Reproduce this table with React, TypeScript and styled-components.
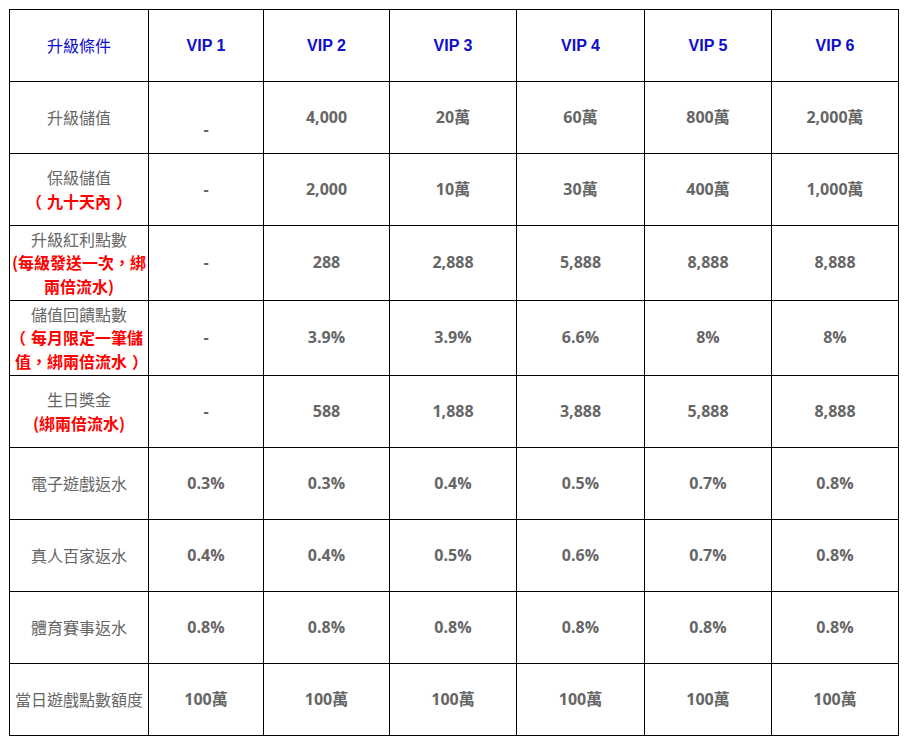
import React from "react";
import styled, { createGlobalStyle } from "styled-components";

const Global = createGlobalStyle`
  html, body { margin: 0; padding: 0; background: #fff; }
  body { font-family: "Open Sans", "Noto Sans CJK TC", sans-serif; }
`;

const Page = styled.div`
  padding: 9px;
`;

const Table = styled.table`
  border-collapse: separate;
  border-spacing: 0;
  table-layout: fixed;
  width: 890px;
  border-top: 1px solid #000;
  border-left: 1px solid #000;
`;

const Row = styled.tr<{ $h: number }>`
  height: ${(p) => p.$h}px;
`;

const Cell = styled.td`
  box-sizing: border-box;
  border-right: 1px solid #000;
  border-bottom: 1px solid #000;
  padding: 0 1px;
  text-align: center;
  vertical-align: middle;
  font-size: 16px;
  line-height: 23.5px;
`;

const Head = styled(Cell)<{ $label?: boolean }>`
  color: #0d0dcc;
  font-weight: ${(p) => (p.$label ? 400 : 700)};
  font-family: ${(p) =>
    p.$label
      ? `"Noto Sans CJK TC", sans-serif`
      : `"Liberation Sans", "Noto Sans CJK TC", sans-serif`};
`;

const Label = styled(Cell)`
  color: #666;
  font-family: "Noto Sans CJK TC", sans-serif;
  font-weight: 400;
`;

const Note = styled.span`
  display: block;
  color: #f00;
  font-weight: 700;
`;

/* full-width parens drawn with their ink nearer the middle of the em box */
const Paren = styled.span<{ $open: boolean }>`
  margin-left: ${(p) => (p.$open ? "-5px" : "5px")};
  margin-right: ${(p) => (p.$open ? "5px" : "-5px")};
`;

const Value = styled(Cell)`
  color: #666;
  font-weight: 700;
  font-family: "Open Sans", "Noto Sans CJK TC", sans-serif;
`;

const widths = [139, 115, 126, 127, 128, 127, 127];

function renderNote(text: string) {
  const parts = text.split(/([（）])/).filter((s) => s !== "");
  return parts.map((p, i) =>
    p === "（" || p === "）" ? (
      <Paren key={i} $open={p === "（"}>
        {p}
      </Paren>
    ) : (
      <React.Fragment key={i}>{p}</React.Fragment>
    )
  );
}

type RowData = {
  label: string;
  note?: string;
  h: number;
  values: React.ReactNode[];
};

const rows: RowData[] = [
  {
    label: "升級儲值",
    h: 72,
    values: [
      <>
        <br />-
      </>,
      "4,000",
      "20萬",
      "60萬",
      "800萬",
      "2,000萬",
    ],
  },
  {
    label: "保級儲值",
    note: "（九十天內）",
    h: 72,
    values: ["-", "2,000", "10萬", "30萬", "400萬", "1,000萬"],
  },
  {
    label: "升級紅利點數",
    note: "(每級發送一次，綁兩倍流水)",
    h: 75,
    values: ["-", "288", "2,888", "5,888", "8,888", "8,888"],
  },
  {
    label: "儲值回饋點數",
    note: "（每月限定一筆儲值，綁兩倍流水）",
    h: 75,
    values: ["-", "3.9%", "3.9%", "6.6%", "8%", "8%"],
  },
  {
    label: "生日獎金",
    note: "(綁兩倍流水)",
    h: 72,
    values: ["-", "588", "1,888", "3,888", "5,888", "8,888"],
  },
  {
    label: "電子遊戲返水",
    h: 72,
    values: ["0.3%", "0.3%", "0.4%", "0.5%", "0.7%", "0.8%"],
  },
  {
    label: "真人百家返水",
    h: 72,
    values: ["0.4%", "0.4%", "0.5%", "0.6%", "0.7%", "0.8%"],
  },
  {
    label: "體育賽事返水",
    h: 72,
    values: ["0.8%", "0.8%", "0.8%", "0.8%", "0.8%", "0.8%"],
  },
  {
    label: "當日遊戲點數額度",
    h: 72,
    values: ["100萬", "100萬", "100萬", "100萬", "100萬", "100萬"],
  },
];

export default function App() {
  return (
    <Page>
      <Global />
      <Table>
        <colgroup>
          {widths.map((w, i) => (
            <col key={i} style={{ width: w }} />
          ))}
        </colgroup>
        <tbody>
          <Row $h={72}>
            <Head $label>升級條件</Head>
            {[1, 2, 3, 4, 5, 6].map((n) => (
              <Head key={n}>VIP {n}</Head>
            ))}
          </Row>
          {rows.map((r) => (
            <Row key={r.label} $h={r.h}>
              <Label>
                {r.label}
                {r.note && <Note>{renderNote(r.note)}</Note>}
              </Label>
              {r.values.map((v, i) => (
                <Value key={i}>{v}</Value>
              ))}
            </Row>
          ))}
        </tbody>
      </Table>
    </Page>
  );
}
